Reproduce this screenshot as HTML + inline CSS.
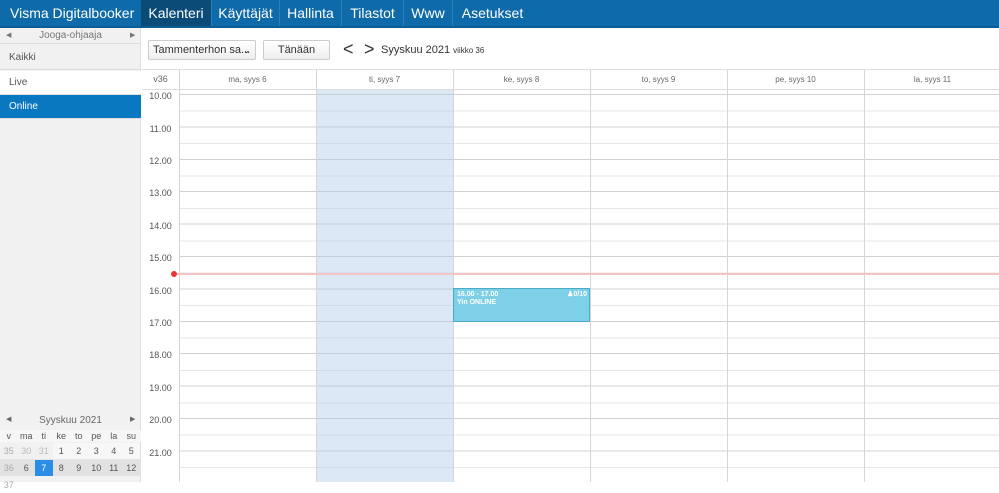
<!DOCTYPE html><html><head><meta charset="utf-8"><style>
*{margin:0;padding:0;box-sizing:border-box}
body{width:999px;height:482px;overflow:hidden;font-family:"Liberation Sans",sans-serif;background:#fff;position:relative}
.top{position:absolute;left:0;top:0;width:999px;height:28px;background:#0e6aa8;border-bottom:2px solid #0a5d95}
.top div{position:absolute;top:0;height:26px;line-height:26px;color:#fff;font-size:14px;white-space:nowrap}
.sep{border-left:1px solid #2a80bb}
.side{position:absolute;left:0;top:28px;width:141px;height:454px;background:#f1f1f1;border-right:1px solid #ddd}
.it{position:absolute;left:0;width:141px;height:24px;line-height:24px;padding-left:9px;font-size:10px;color:#555;border-bottom:1px solid #ddd}
.abs{position:absolute}
.btn{position:absolute;top:40px;height:20px;border:1px solid #ccc;border-radius:2px;background:linear-gradient(#fff,#eee);font-size:11px;color:#333;line-height:18px;white-space:nowrap;overflow:hidden}
.grid{position:absolute;left:179px;top:90px;width:820px;height:392px;
background:repeating-linear-gradient(to bottom,transparent 0,transparent 4px,#d0d0d0 4px,#d0d0d0 5px,transparent 5px,transparent 20.7px,#e6e6e6 20.7px,#e6e6e6 21.7px,transparent 21.7px,transparent 32.4px)}
.vl{position:absolute;top:70px;width:1px;height:412px;background:#d6d6d6}
.dh{position:absolute;top:70px;height:19px;line-height:19px;font-size:8px;color:#666;text-align:center;width:137px}
.tl{position:absolute;left:142px;width:37px;text-align:center;font-size:9px;color:#555}
.cal{position:absolute;font-size:9px;color:#555;text-align:center;width:17.5px;height:16px;line-height:16px}
</style></head><body>
<div class="top">
<div style="left:0;width:141px;padding-left:10px;font-size:14px">Visma Digitalbooker</div>
<div style="left:141px;width:70px;background:#0a4b78;text-align:center">Kalenteri</div>
<div class="sep" style="left:211px;width:68px;text-align:center">Käyttäjät</div>
<div class="sep" style="left:279px;width:62px;text-align:center">Hallinta</div>
<div class="sep" style="left:341px;width:62px;text-align:center">Tilastot</div>
<div class="sep" style="left:403px;width:49px;text-align:center">Www</div>
<div class="sep" style="left:452px;width:80px;text-align:center">Asetukset</div>
</div>
<div class="side">
<div class="it" style="top:0;height:16px;line-height:16px;text-align:center;padding:0;color:#777">Jooga-ohjaaja<span class="abs" style="left:6px;font-size:7px">◀</span><span class="abs" style="left:130px;font-size:7px">▶</span></div>
<div class="it" style="top:18px;height:24px">Kaikki</div>
<div class="it" style="top:43px;background:#fff">Live</div>
<div class="it" style="top:67px;background:#0a78c0;color:#fff;height:24px">Online</div>
<div class="abs" style="top:387px;width:141px;text-align:center;font-size:10px;color:#666">Syyskuu 2021<span class="abs" style="left:6px;font-size:7px">◀</span><span class="abs" style="left:130px;font-size:7px">▶</span></div>
</div>
<div class="btn" style="left:148px;width:108px;padding-left:4px">Tammenterhon sa...<span class="abs" style="left:94px;top:0;font-size:9px">⌄</span></div>
<div class="btn" style="left:263px;width:67px;text-align:center">Tänään</div>
<div class="abs" style="left:343px;top:39px;font-size:18px;color:#333">&lt;</div>
<div class="abs" style="left:364px;top:39px;font-size:18px;color:#333">&gt;</div>
<div class="abs" style="left:381px;top:44px;font-size:11px;color:#333">Syyskuu 2021 <span style="font-size:8px">viikko 36</span></div>
<div class="abs" style="left:142px;top:69px;width:857px;height:1px;background:#ddd"></div>
<div class="abs" style="left:142px;top:89px;width:857px;height:1px;background:#ddd"></div>
<div class="grid"></div>
<div class="abs" style="left:316px;top:90px;width:137px;height:392px;background:rgba(180,205,235,.45)"></div>
<div class="vl" style="left:179px"></div><div class="vl" style="left:316px"></div><div class="vl" style="left:453px"></div><div class="vl" style="left:590px"></div><div class="vl" style="left:727px"></div><div class="vl" style="left:864px"></div>
<div class="abs" style="left:142px;top:70px;width:37px;text-align:center;font-size:9px;color:#666;line-height:19px">v36</div>
<div class="dh" style="left:179px">ma, syys 6</div><div class="dh" style="left:316px">ti, syys 7</div><div class="dh" style="left:453px">ke, syys 8</div><div class="dh" style="left:590px">to, syys 9</div><div class="dh" style="left:727px">pe, syys 10</div><div class="dh" style="left:864px">la, syys 11</div>
<div class="tl" style="top:91px">10.00</div><div class="tl" style="top:124px">11.00</div><div class="tl" style="top:156px">12.00</div><div class="tl" style="top:188px">13.00</div><div class="tl" style="top:221px">14.00</div><div class="tl" style="top:253px">15.00</div><div class="tl" style="top:286px">16.00</div><div class="tl" style="top:318px">17.00</div><div class="tl" style="top:350px">18.00</div><div class="tl" style="top:383px">19.00</div><div class="tl" style="top:415px">20.00</div><div class="tl" style="top:448px">21.00</div>
<div class="abs" style="left:176px;top:273px;width:823px;height:2px;background:#f4c4c4"></div>
<div class="abs" style="left:171px;top:271px;width:6px;height:6px;border-radius:3px;background:#e33"></div>
<div class="abs" style="left:453px;top:288px;width:137px;height:34px;background:#7dd0e8;border:1px solid #4aaac8;color:#fff;font-size:7px;font-weight:bold;padding:2px 3px;line-height:8px">16.00 - 17.00<br>Yin ONLINE<span class="abs" style="right:2px;top:2px">♟0/10</span></div>
<div class="abs" style="left:0;top:430px;width:141px;height:12px;background:#f6f6f6"></div>
<div class="cal" style="left:0;top:428px">v</div><div class="cal" style="left:17.5px;top:428px">ma</div><div class="cal" style="left:35px;top:428px">ti</div><div class="cal" style="left:52.5px;top:428px">ke</div><div class="cal" style="left:70px;top:428px">to</div><div class="cal" style="left:87.5px;top:428px">pe</div><div class="cal" style="left:105px;top:428px">la</div><div class="cal" style="left:122.5px;top:428px">su</div>
<div class="cal" style="left:0;top:443px;color:#aaa">35</div><div class="cal" style="left:17.5px;top:443px;color:#bbb">30</div><div class="cal" style="left:35px;top:443px;color:#bbb">31</div><div class="cal" style="left:52.5px;top:443px;background:#f7f7f7">1</div><div class="cal" style="left:70px;top:443px;background:#f7f7f7">2</div><div class="cal" style="left:87.5px;top:443px;background:#f7f7f7">3</div><div class="cal" style="left:105px;top:443px;background:#f7f7f7">4</div><div class="cal" style="left:122.5px;top:443px;background:#f7f7f7">5</div>
<div class="abs" style="left:0;top:459px;width:141px;height:17px;background:#e2e2e2"></div>
<div class="cal" style="left:0;top:460px;color:#aaa">36</div><div class="cal" style="left:17.5px;top:460px">6</div><div class="cal" style="left:35px;top:460px;background:#2a8ee6;color:#fff">7</div><div class="cal" style="left:52.5px;top:460px">8</div><div class="cal" style="left:70px;top:460px">9</div><div class="cal" style="left:87.5px;top:460px">10</div><div class="cal" style="left:105px;top:460px">11</div><div class="cal" style="left:122.5px;top:460px">12</div>
<div class="cal" style="left:0;top:477px;color:#aaa">37</div>
</body></html>
